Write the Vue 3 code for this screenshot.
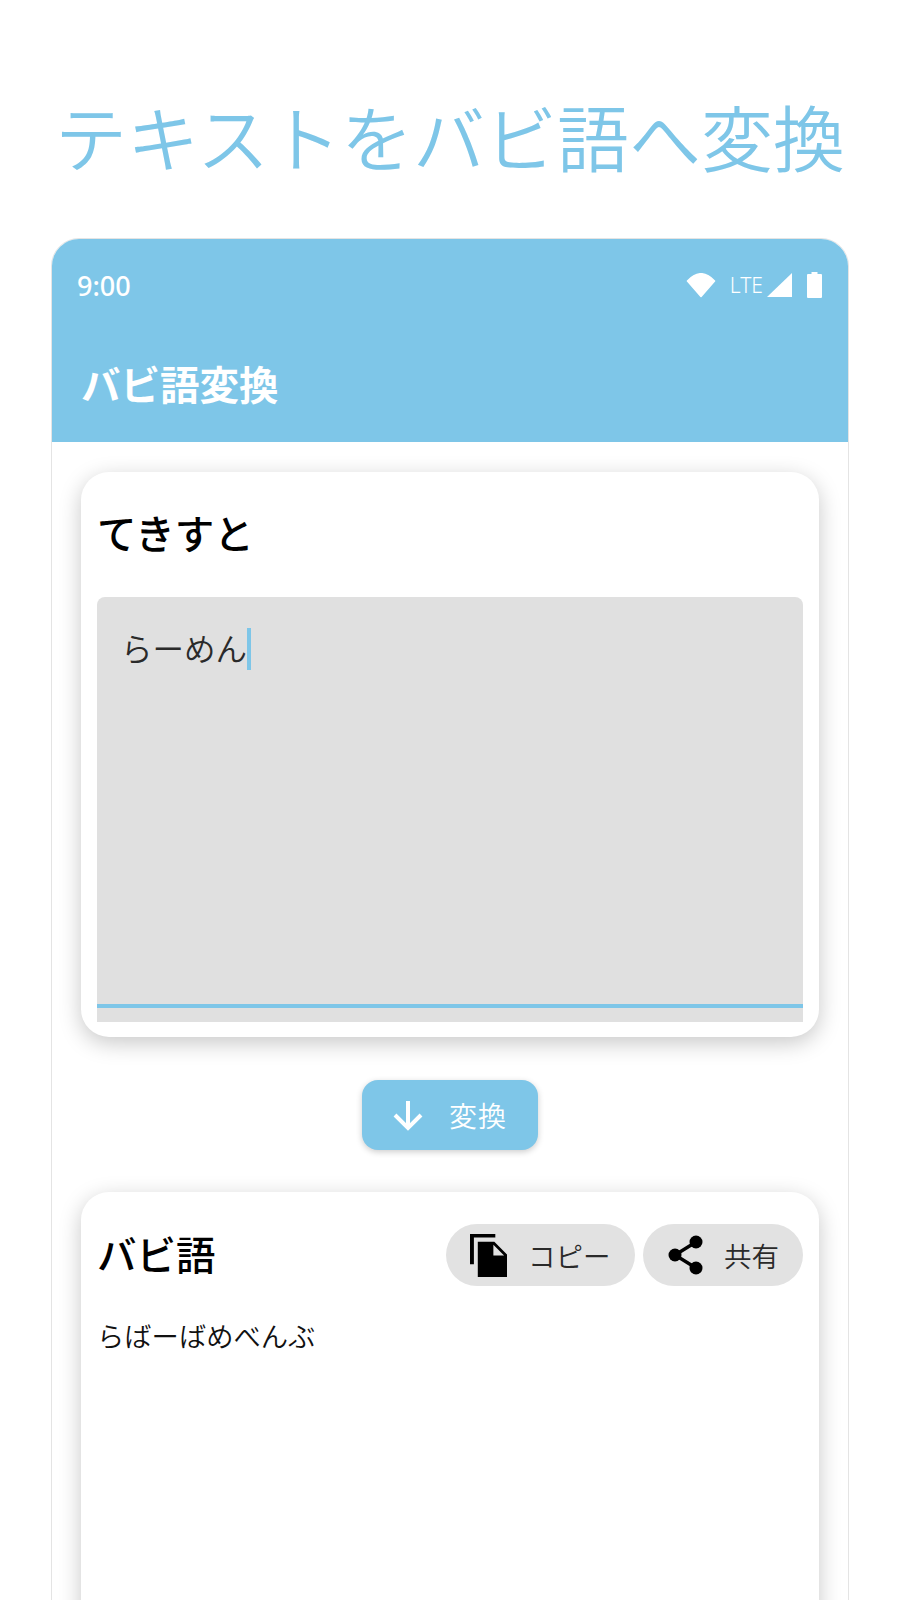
<script setup>
const title = 'テキストをバビ語へ変換'
const inputText = 'らーめん'
const outputText = 'らばーばめべんぶ'
</script>

<template>
  <div class="page">
    <h1 class="page-title">{{ title }}</h1>

    <div class="phone">
      <header class="app-header">
        <div class="status-bar">
          <span class="clock">9:00</span>
          <div class="status-icons">
            <svg class="wifi" viewBox="0 0 30 25" width="30" height="25">
              <path d="M15 23.5 L1.5 8 Q15 -6.5 28.5 8 Z" fill="#fff" stroke="#fff" stroke-width="1.6" stroke-linejoin="round" />
            </svg>
            <span class="lte">LTE</span>
            <svg class="signal" viewBox="0 0 25 24" width="25" height="24">
              <path d="M25 0 V24 H0 Z" fill="#fff" />
            </svg>
            <svg class="battery" viewBox="0 0 15 26" width="15" height="26">
              <path d="M4.5 0 H10.5 V2 H14 Q15 2 15 3 V25 Q15 26 14 26 H1 Q0 26 0 25 V3 Q0 2 1 2 H4.5 Z" fill="#fff" />
            </svg>
          </div>
        </div>
        <div class="app-title">バビ語変換</div>
      </header>

      <main class="content">
        <section class="card input-card">
          <h2 class="card-title">てきすと</h2>
          <div class="text-field">
            <div class="field-text">{{ inputText }}<span class="caret"></span></div>
            <div class="field-line"></div>
          </div>
        </section>

        <button class="convert-button" type="button">
          <svg viewBox="0 0 36 36" width="36" height="36">
            <path d="M18 4 V31 M5 18 L18 31 L31 18" fill="none" stroke="#fff" stroke-width="4" />
          </svg>
          <span>変換</span>
        </button>

        <section class="card output-card">
          <div class="output-head">
            <h2 class="card-title">バビ語</h2>
            <div class="chips">
              <button class="chip copy-chip" type="button">
                <svg viewBox="0 0 38 44" width="37" height="43">
                  <path d="M0 0 H26 V3.5 H4 V31 H0 Z" fill="#000" />
                  <path fill-rule="evenodd" d="M8 8 H25 L38 21 V44 H8 Z M24 11 V22 H35 Z" fill="#000" />
                </svg>
                <span>コピー</span>
              </button>
              <button class="chip share-chip" type="button">
                <svg viewBox="0 0 36 40" width="36" height="40">
                  <path d="M28 7 L7 20 L28 33" fill="none" stroke="#000" stroke-width="3.4" />
                  <circle cx="28" cy="7" r="6.5" fill="#000" />
                  <circle cx="7" cy="20" r="6.5" fill="#000" />
                  <circle cx="28" cy="33" r="6.5" fill="#000" />
                </svg>
                <span>共有</span>
              </button>
            </div>
          </div>
          <p class="output-text">{{ outputText }}</p>
        </section>
      </main>
    </div>
  </div>
</template>

<style>
html,
body {
  margin: 0;
  background: #ffffff;
}
</style>

<style scoped>
.page {
  box-sizing: border-box;
  height: 1600px;
  overflow: hidden;
  padding: 88px 51px 0;
  background: #ffffff;
  font-family: "Noto Sans", "Noto Sans CJK JP", sans-serif;
}

.page-title {
  margin: 0 -10px 50px;
  color: #7ec6e8;
  font-size: 72px;
  font-weight: 350;
  line-height: 100px;
  text-align: center;
  white-space: nowrap;
}

.phone {
  height: 1400px;
  border: 1px solid #e4e4e4;
  border-radius: 28px 28px 0 0;
  overflow: hidden;
}

.app-header {
  height: 203px;
  background: #7ec6e8;
  color: #ffffff;
}

.status-bar {
  display: flex;
  align-items: center;
  justify-content: space-between;
  height: 92px;
  padding: 0 26px 0 25px;
}

.clock {
  font-size: 27px;
  font-weight: 500;
}

.status-icons {
  display: flex;
  align-items: center;
}

.lte {
  margin: 0 4px 0 14px;
  font-size: 21px;
  font-weight: 300;
}

.battery {
  margin-left: 15px;
}

.app-title {
  padding: 26px 29px 0;
  font-size: 39.5px;
  font-weight: 600;
  line-height: 56px;
}

.content {
  display: flex;
  flex-direction: column;
  align-items: center;
  padding: 30px 29px 0;
}

.card {
  box-sizing: border-box;
  width: 100%;
  border-radius: 28px;
  background: #ffffff;
  box-shadow: 0 6px 22px rgba(0, 0, 0, 0.22);
  padding: 0 16px;
}

.input-card {
  height: 565px;
}

.card-title {
  margin: 0;
  color: #000000;
  font-size: 39.5px;
  font-weight: 500;
  line-height: 56px;
}

.input-card .card-title {
  padding: 34px 0 35px;
}

.text-field {
  display: flex;
  flex-direction: column;
  justify-content: space-between;
  height: 425px;
  border-radius: 8px 8px 0 0;
  background: #e0e0e0;
}

.field-text {
  display: flex;
  align-items: center;
  padding: 31px 24px 0;
  color: #2a2a2a;
  font-size: 31.5px;
  font-weight: 350;
  line-height: 42px;
}

.caret {
  width: 4px;
  height: 42px;
  background: #7ec6e8;
}

.field-line {
  height: 4px;
  margin-bottom: 14px;
  background: #7ec6e8;
}

.convert-button {
  display: flex;
  align-items: center;
  gap: 23px;
  width: 176px;
  height: 70px;
  margin: 43px 0 42px;
  padding: 0 0 0 28px;
  border: 0;
  border-radius: 16px;
  background: #7ec6e8;
  box-shadow: 0 2px 6px rgba(0, 0, 0, 0.2);
  color: #ffffff;
  font-family: inherit;
  font-size: 28px;
  font-weight: 350;
  letter-spacing: 1px;
}

.output-card {
  flex: none;
  height: 600px;
  padding-top: 32px;
}

.output-head {
  display: flex;
  align-items: center;
  justify-content: space-between;
}

.chips {
  display: flex;
  gap: 8px;
}

.chip {
  display: flex;
  align-items: center;
  height: 62px;
  padding: 0;
  border: 0;
  border-radius: 31px;
  background: #e2e2e2;
  color: #2a2a2a;
  font-family: inherit;
  font-size: 27.5px;
  font-weight: 350;
}

.copy-chip {
  gap: 21px;
  width: 189px;
  padding-left: 24px;
}

.share-chip {
  gap: 20px;
  width: 160px;
  padding-left: 25px;
}

.output-text {
  margin: 30px 0 0;
  color: #111111;
  font-size: 27.3px;
  font-weight: 350;
  line-height: 42px;
}
</style>
